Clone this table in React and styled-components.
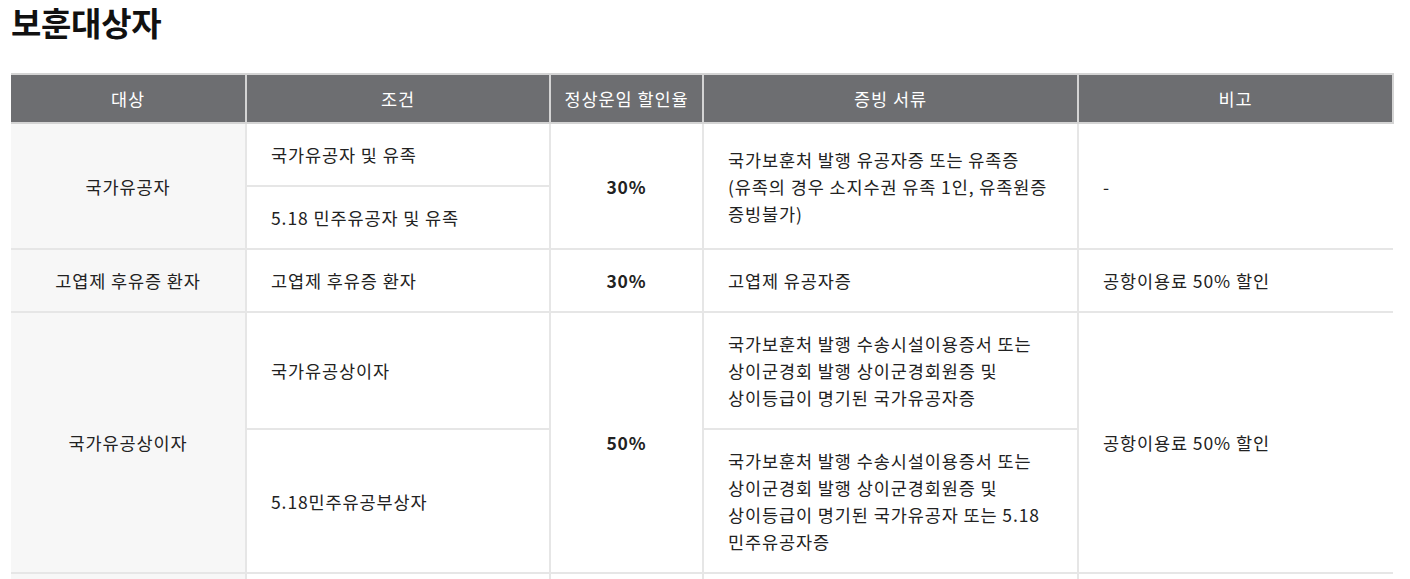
import { createGlobalStyle, styled } from "styled-components";

const GlobalStyle = createGlobalStyle`
  body {
    margin: 0;
    background: #fff;
    font-family: "Noto Sans CJK KR", "Noto Sans", sans-serif;
    color: #222;
  }
`;

const Page = styled.div`
  padding: 0 11px 40px;
`;

const Title = styled.h2`
  margin: 0;
  font-size: 33px;
  line-height: 45px;
  font-weight: 700;
  color: #111;
  letter-spacing: -0.3px;
`;

const Table = styled.table`
  margin-top: 28px;
  width: 1382px;
  border-collapse: collapse;
  table-layout: fixed;
  font-size: 17.5px;
  line-height: 27px;
  letter-spacing: 0.9px;
`;

const Th = styled.th`
  height: 47px;
  padding: 0 10px;
  background: #6d6e71;
  color: #fff;
  font-weight: 400;
  text-align: center;
  border: 2px solid #d4d4d4;
  border-left: ${(p) => (p.$first ? "none" : "2px solid #d4d4d4")};
`;

const Td = styled.td`
  padding: 17px 24px;
  border: 2px solid #e6e6e6;
  border-left: ${(p) => (p.$first ? "none" : "2px solid #e6e6e6")};
  border-right: ${(p) => (p.$last ? "none" : "2px solid #e6e6e6")};
  background: ${(p) => (p.$shade ? "#f7f7f7" : "#fff")};
  text-align: ${(p) => (p.$center ? "center" : "left")};
  font-weight: ${(p) => (p.$bold ? 700 : 400)};
  vertical-align: middle;
  white-space: nowrap;
`;

const EmptyRow = styled.tr`
  height: 60px;
`;

export default function App() {
  return (
    <Page>
      <GlobalStyle />
      <Title>보훈대상자</Title>
      <Table>
        <colgroup>
          <col style={{ width: 235 }} />
          <col style={{ width: 304 }} />
          <col style={{ width: 153 }} />
          <col style={{ width: 375 }} />
          <col style={{ width: 315 }} />
        </colgroup>
        <thead>
          <tr>
            <Th $first>대상</Th>
            <Th>조건</Th>
            <Th>정상운임 할인율</Th>
            <Th>증빙 서류</Th>
            <Th>비고</Th>
          </tr>
        </thead>
        <tbody>
          <tr>
            <Td $first $shade $center rowSpan={2}>국가유공자</Td>
            <Td>국가유공자 및 유족</Td>
            <Td $center $bold rowSpan={2}>30%</Td>
            <Td rowSpan={2}>
              국가보훈처 발행 유공자증 또는 유족증
              <br />
              (유족의 경우 소지수권 유족 1인, 유족원증
              <br />
              증빙불가)
            </Td>
            <Td $last rowSpan={2}>-</Td>
          </tr>
          <tr>
            <Td>5.18 민주유공자 및 유족</Td>
          </tr>
          <tr>
            <Td $first $shade $center>고엽제 후유증 환자</Td>
            <Td>고엽제 후유증 환자</Td>
            <Td $center $bold>30%</Td>
            <Td>고엽제 유공자증</Td>
            <Td $last>공항이용료 50% 할인</Td>
          </tr>
          <tr>
            <Td $first $shade $center rowSpan={2}>국가유공상이자</Td>
            <Td>국가유공상이자</Td>
            <Td $center $bold rowSpan={2}>50%</Td>
            <Td>
              국가보훈처 발행 수송시설이용증서 또는
              <br />
              상이군경회 발행 상이군경회원증 및
              <br />
              상이등급이 명기된 국가유공자증
            </Td>
            <Td $last rowSpan={2}>공항이용료 50% 할인</Td>
          </tr>
          <tr>
            <Td>5.18민주유공부상자</Td>
            <Td>
              국가보훈처 발행 수송시설이용증서 또는
              <br />
              상이군경회 발행 상이군경회원증 및
              <br />
              상이등급이 명기된 국가유공자 또는 5.18
              <br />
              민주유공자증
            </Td>
          </tr>
          <EmptyRow>
            <Td $first $shade />
            <Td />
            <Td />
            <Td />
            <Td $last />
          </EmptyRow>
        </tbody>
      </Table>
    </Page>
  );
}
